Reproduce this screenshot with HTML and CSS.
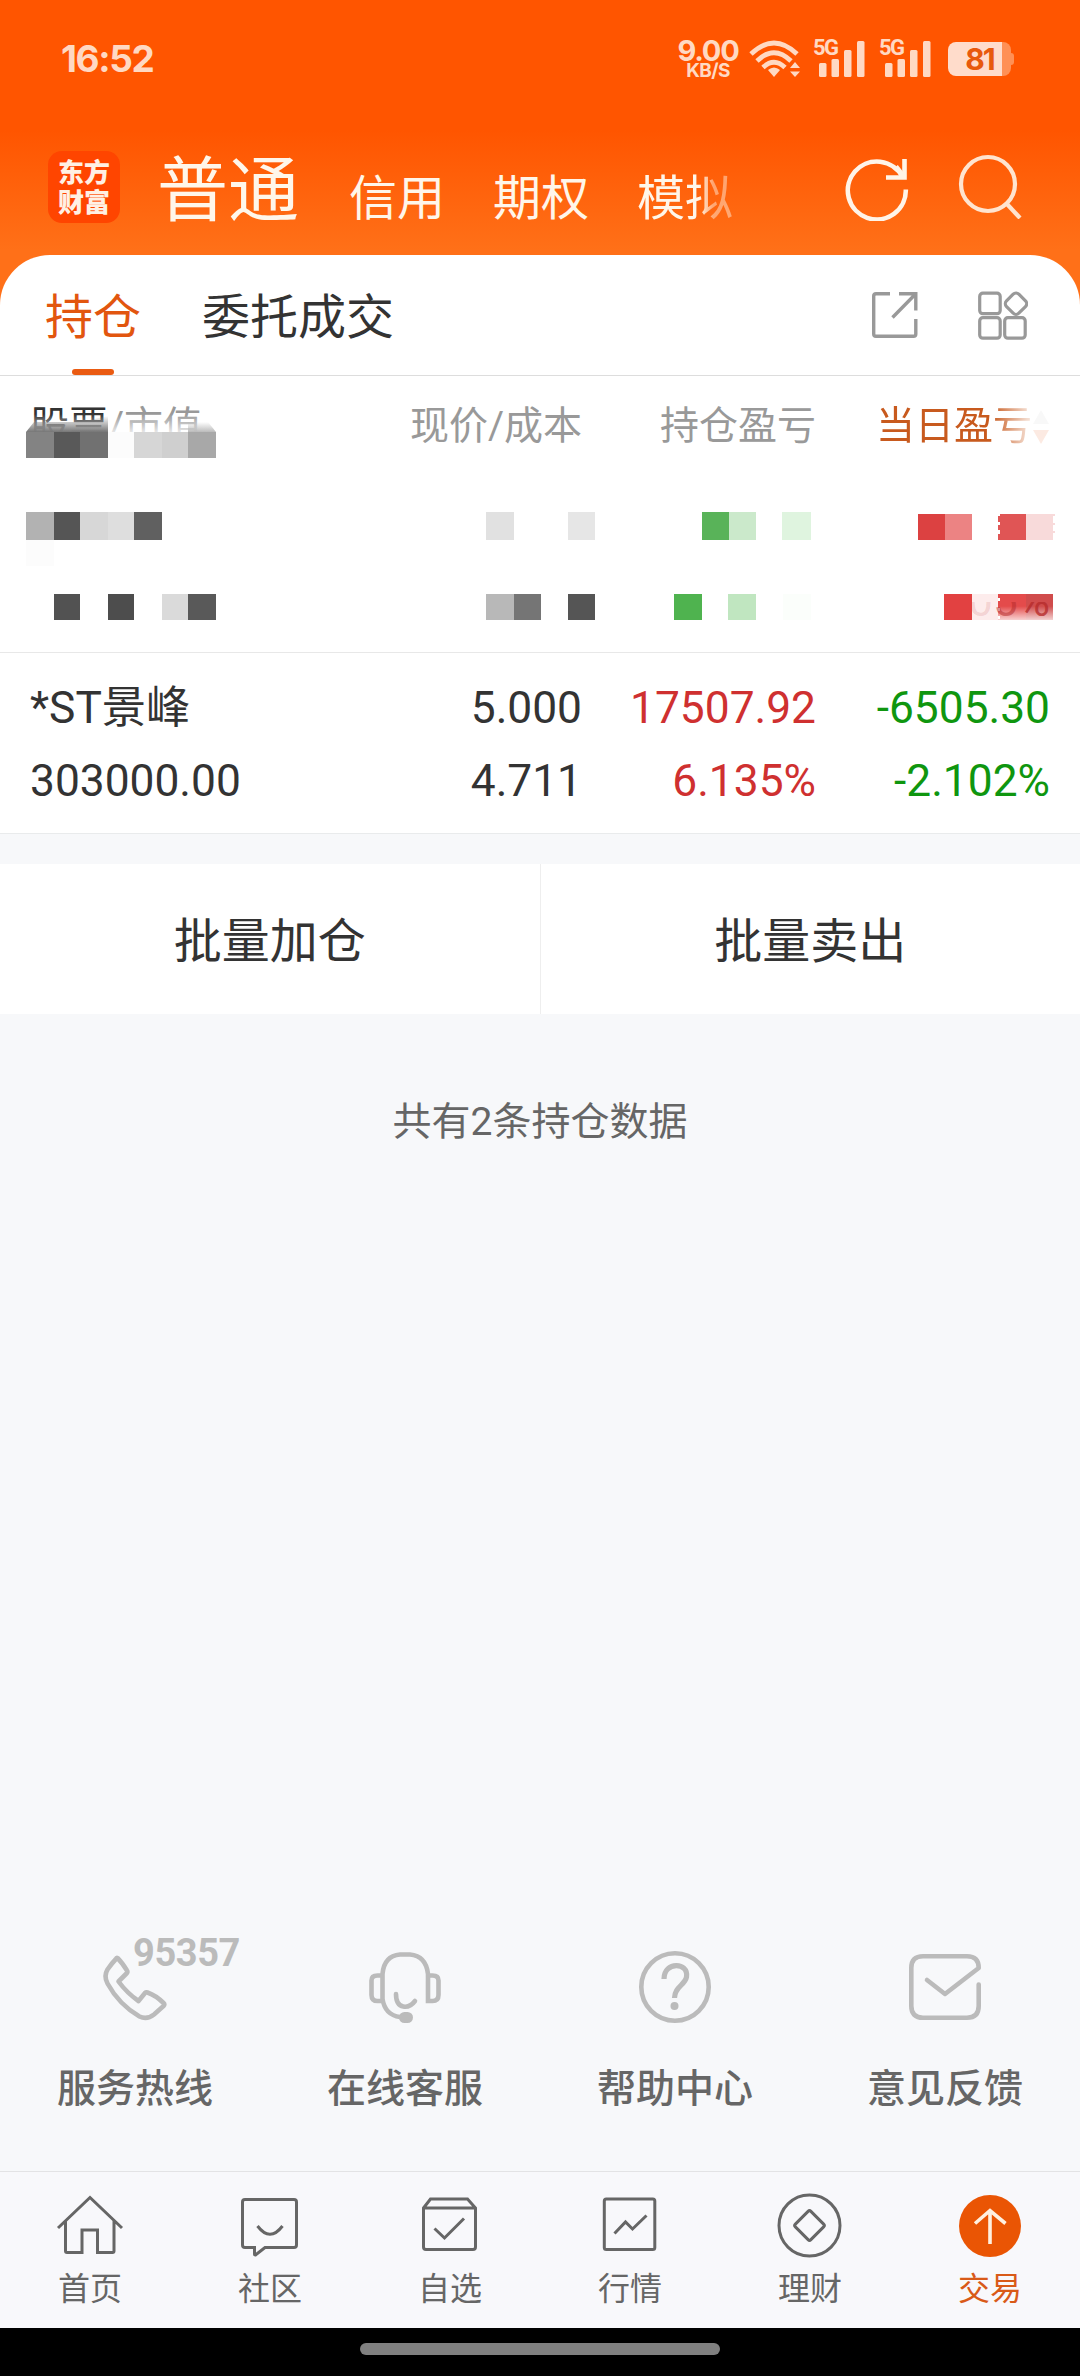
FILE: index.html
```html
<!DOCTYPE html>
<html lang="zh-CN">
<head>
<meta charset="utf-8">
<title>持仓</title>
<link rel="stylesheet" href="styles.css">
</head>
<body>
<div class="app">
  <header class="top">
    <div class="status">
      <span class="clock">16:52</span>
      <div class="status-right">
        <div class="speed"><b>9.00</b><small>KB/S</small></div>
        <svg class="wifi" viewBox="0 0 52 38" width="52" height="38">
          <g fill="none" stroke="#ffd9c3" stroke-width="4.800">
            <path d="M2 14Q25 -8 48 14"/><path d="M8 21Q25 4.500 42 21"/><path d="M14 27.500Q25 17 36 27.500"/>
          </g>
          <path d="M19 30Q25 25 31 30L25 37Z" fill="#ffd9c3"/>
          <path d="M41 28L46 22L51 28ZM41 31.500H51L46 37Z" fill="#ffd9c3"/>
        </svg>
        <div class="signal"><i>5G</i>
          <svg viewBox="0 0 52 38" width="52" height="38" fill="#ffd9c3"><rect x="6" y="23" width="7.500" height="14" rx="1.500"/><rect x="18.500" y="19" width="7.500" height="18" rx="1.500"/><rect x="31" y="10" width="7.500" height="27" rx="1.500"/><rect x="44" y="1" width="7.500" height="36" rx="1.500"/></svg>
        </div>
        <div class="signal"><i>5G</i>
          <svg viewBox="0 0 52 38" width="52" height="38" fill="#ffd9c3"><rect x="6" y="23" width="7.500" height="14" rx="1.500"/><rect x="18.500" y="19" width="7.500" height="18" rx="1.500"/><rect x="31" y="10" width="7.500" height="27" rx="1.500"/><rect x="44" y="1" width="7.500" height="36" rx="1.500"/></svg>
        </div>
        <div class="battery"><span>81</span></div>
      </div>
    </div>
    <div class="nav">
      <div class="logo"><span>东方</span><span>财富</span></div>
      <div class="accounts">
        <span class="current">普通</span><span>信用</span><span>期权</span><span class="fade">模拟</span>
      </div>
      <svg class="refresh" viewBox="0 0 66 66" width="66" height="66" fill="none" stroke="#fff4e8" stroke-width="4.600">
        <path d="M61.800 34.500A29 29 0 1 1 58.500 22"/><path d="M60.500 4V22.500H42"/><path d="M52 11.500L60.500 22.500"/>
      </svg>
      <svg class="search" viewBox="0 0 66 66" width="66" height="66" fill="none" stroke="#ffe4cf" stroke-width="4.200">
        <circle cx="31" cy="31" r="27"/><path d="M49.500 50.500L63 65"/>
      </svg>
    </div>
  </header>

  <main class="panel">
    <div class="tabs">
      <span class="tab on">持仓</span><span class="tab">委托成交</span>
      <svg class="share" viewBox="0 0 48 48" width="48" height="48" fill="none" stroke="#999" stroke-width="3.400">
        <path d="M19 2.700H5Q2.700 2.700 2.700 5V43Q2.700 45.300 5 45.300H42.500Q44.800 45.300 44.800 43V28"/><path d="M28 2.700H44.800V19.500M44.300 3.200L21.500 26.500"/>
      </svg>
      <svg class="modules" viewBox="0 0 50 50" width="50" height="50" fill="none" stroke="#999" stroke-width="3.200">
        <rect x="1.700" y="2.200" width="20.500" height="20.500" rx="3.200"/><rect x="1.700" y="26.700" width="20.500" height="20.500" rx="3.200"/><rect x="26.700" y="26.700" width="20.500" height="20.500" rx="3.200"/>
        <rect x="29.300" y="4" width="17.400" height="17.400" rx="4" transform="rotate(45 38 12.700)"/>
      </svg>
    </div>

    <div class="holdings">
      <div class="row head">
        <span><em>股票</em>/市值</span><span>现价/成本</span><span>持仓盈亏</span>
        <span class="sorted">当日盈亏<svg viewBox="0 0 18 36" width="18" height="36"><path d="M1 15L9 1L17 15Z" fill="#ddd"/><path d="M1 21L9 35L17 21Z" fill="#f0986c"/></svg></span>
      </div>
      <div class="row hidden-row"></div>
      <div class="row stock">
        <span>*ST景峰<br>303000.00</span><span>5.000<br>4.711</span><span class="up">17507.92<br>6.135%</span><span class="down">-6505.30<br>-2.102%</span>
      </div>
      <!-- privacy mosaic over the first holding -->
      <svg class="mosaic" viewBox="0 0 1080 276" width="1080" height="276">
        <defs>
          <linearGradient id="rise" x1="0" y1="0" x2="0" y2="1"><stop offset="0" stop-color="#fff" stop-opacity="0"/><stop offset="1" stop-color="#fff" stop-opacity=".75"/></linearGradient>
          <linearGradient id="dark" x1="0" y1="0" x2="0" y2="1"><stop offset="0" stop-color="#777" stop-opacity="0"/><stop offset="1" stop-color="#777"/></linearGradient>
          <linearGradient id="pale" x1="0" y1="0" x2="0" y2="1"><stop offset="0" stop-color="#bbb" stop-opacity="0"/><stop offset="1" stop-color="#bbb"/></linearGradient>
          <linearGradient id="redfade" x1="0" y1="0" x2="0" y2="1"><stop offset=".45" stop-color="#fff" stop-opacity="0"/><stop offset="1" stop-color="#fff" stop-opacity=".8"/></linearGradient>
          <clipPath id="residue"><rect x="972" y="226" width="82" height="20"/></clipPath>
        </defs>
        <rect x="26" y="38" width="190" height="18" fill="url(#rise)"/>
        <path d="M26 56L34 46H80L108 40V56Z" fill="url(#dark)"/>
        <path d="M188 56V46H208L216 56Z" fill="url(#pale)"/>
        <g shape-rendering="crispEdges">
          <rect x="26" y="56" width="28" height="26" fill="#838383"/><rect x="54" y="56" width="26" height="26" fill="#595959"/><rect x="80" y="56" width="28" height="26" fill="#717171"/><rect x="108" y="56" width="26" height="26" fill="#fcfcfc"/><rect x="134" y="56" width="28" height="26" fill="#d6d6d6"/><rect x="162" y="56" width="26" height="26" fill="#cfcfcf"/><rect x="188" y="56" width="28" height="26" fill="#a8a8a8"/>
          <rect x="26" y="136" width="28" height="28" fill="#b2b2b2"/><rect x="54" y="136" width="26" height="28" fill="#555"/><rect x="80" y="136" width="28" height="28" fill="#d7d7d7"/><rect x="108" y="136" width="26" height="28" fill="#dedede"/><rect x="134" y="136" width="28" height="28" fill="#606060"/><rect x="26" y="164" width="28" height="26" fill="#fcfcfc"/>
          <rect x="486" y="136" width="28" height="28" fill="#e1e1e1"/><rect x="568" y="136" width="27" height="28" fill="#e6e6e6"/>
          <rect x="702" y="136" width="27" height="28" fill="#59b359"/><rect x="729" y="136" width="27" height="28" fill="#cbe9cb"/><rect x="782" y="136" width="29" height="28" fill="#dff4df"/>
          <rect x="918" y="138" width="27" height="26" fill="#dc4141"/><rect x="945" y="138" width="27" height="26" fill="#ec8383"/><rect x="998" y="138" width="28" height="26" fill="#e05555"/><rect x="1026" y="138" width="27" height="26" fill="#f8dada"/>
          <rect x="54" y="218" width="26" height="26" fill="#525252"/><rect x="108" y="218" width="26" height="26" fill="#4d4d4d"/><rect x="162" y="218" width="26" height="26" fill="#dadada"/><rect x="188" y="218" width="28" height="26" fill="#595959"/>
          <rect x="486" y="218" width="28" height="26" fill="#b8b8b8"/><rect x="514" y="218" width="27" height="26" fill="#757575"/><rect x="568" y="218" width="27" height="26" fill="#555"/>
          <rect x="674" y="218" width="28" height="26" fill="#4fb34f"/><rect x="728" y="218" width="28" height="26" fill="#c0e6c0"/><rect x="783" y="218" width="28" height="26" fill="#fbfefb"/>
          <rect x="944" y="218" width="28" height="26" fill="#e24141"/><rect x="972" y="218" width="26" height="26" fill="#fdecec"/><rect x="998" y="218" width="28" height="26" fill="#e44b4b"/><rect x="1026" y="218" width="27" height="26" fill="#d04c4c"/>
        </g>
        <rect x="998" y="218" width="56" height="27" fill="url(#redfade)"/>
        <path d="M998 137h2v3h-2zM998 146h2v3h-2zM998 154h2v4h-2zM998 222h2v3h-2zM998 232h2v3h-2zM998 240h2v3h-2z" fill="#fff"/>
        <path d="M1053 138h2v2h-2zM1053 147h2v2h-2zM1053 155h2v2h-2z" fill="#f8dada"/>
        <g clip-path="url(#residue)"><text class="residue" x="1050" y="240" text-anchor="end"><tspan fill-opacity=".15">0</tspan><tspan fill-opacity=".55">5</tspan>%</text></g>
      </svg>
    </div>

    <div class="batch"><span>批量加仓</span><span>批量卖出</span></div>
    <p class="count">共有2条持仓数据</p>
  </main>

  <section class="services">
    <div class="service">
      <svg viewBox="0 0 76 76" width="76" height="76" fill="none" stroke="#bbb" stroke-width="4.600" stroke-linejoin="round">
        <path d="M18.500 11.500Q15 15 10.500 21.500Q6.500 28 10.500 35.500Q22 56.500 42.500 68.500Q50 72 57 66.500L66.500 58Q68 56.500 66.500 55Q59 47.500 50.500 44.500Q49 44 48 45L41.500 53Q30 45 21.500 33.500L29.500 25.500Q31 24 30 22.500Q25 14.500 20.500 10Q19.500 9.500 18.500 11.500Z"/>
      </svg>
      <b class="hotline">95357</b>
      <span>服务热线</span>
    </div>
    <div class="service">
      <svg viewBox="0 0 76 76" width="76" height="76" fill="none" stroke="#bbb" stroke-width="4.600">
        <path d="M15 53H10.500Q4.500 53 4.500 47V32.500Q4.500 27.500 10.500 27.500H15M61 27.500H65.500Q71.500 27.500 71.500 32.500V47Q71.500 53 65.500 53H61V26Q59 8 43 6.500H33Q17 8 15.500 26V51Q18 67 33 69"/>
        <path d="M29 46C29 62 42 61 48 53" stroke-linecap="round"/><rect x="32" y="64" width="14" height="11" rx="5.500" fill="#bbb" stroke="none"/>
      </svg>
      <span>在线客服</span>
    </div>
    <div class="service">
      <svg viewBox="0 0 76 76" width="76" height="76" fill="none" stroke="#bbb" stroke-width="4.600">
        <circle cx="38" cy="39" r="33.700"/><path d="M27 31C27 13 52 14 49.500 29C48 37 37.500 39 37.500 50" stroke-width="5.200"/><circle cx="37.500" cy="58" r="4" fill="#bbb" stroke="none"/>
      </svg>
      <span>帮助中心</span>
    </div>
    <div class="service">
      <svg viewBox="0 0 76 76" width="76" height="76" fill="none" stroke="#bbb" stroke-width="4.600" stroke-linejoin="round" stroke-linecap="round">
        <path d="M71.700 36.500V58Q71.700 69.700 60 69.700H16Q4.300 69.700 4.300 58V20Q4.300 8.300 16 8.300H60Q71.700 8.300 71.700 20L38 46L20 32"/>
      </svg>
      <span>意见反馈</span>
    </div>
  </section>

  <nav class="tabbar">
    <div class="item"><svg viewBox="0 0 90 72" width="90" height="72"><path d="M13 38L45 7.500L77 38M20.500 31V61Q20.500 62.500 22 62.500H37V40H52.500V62.500H67.500Q69 62.500 69 61V31"/></svg><span>首页</span></div>
    <div class="item"><svg viewBox="0 0 90 72" width="90" height="72"><path d="M20 9.500H69Q71.500 9.500 71.500 12V55Q71.500 57.500 69 57.500H40L30.500 65Q29.500 65 29.500 64V57.500H20Q17.500 57.500 17.500 55V12Q17.500 9.500 20 9.500Z"/><path d="M32.500 36Q45 52.500 57.500 36"/></svg><span>社区</span></div>
    <div class="item"><svg viewBox="0 0 90 72" width="90" height="72"><path d="M18.500 18L25.500 9H62.500L70.500 18V57Q70.500 59.500 68 59.500H21Q18.500 59.500 18.500 57ZM18.500 18H70.500M29.500 38.500L39.500 48L59 28.500"/></svg><span>自选</span></div>
    <div class="item"><svg viewBox="0 0 90 72" width="90" height="72"><rect x="19.300" y="9" width="50.500" height="50.500" rx="2"/><path d="M29.500 43.500L40.500 32L47.500 39L61.500 25.500"/></svg><span>行情</span></div>
    <div class="item"><svg viewBox="0 0 90 72" width="90" height="72"><circle cx="44.500" cy="35.500" r="30.500"/><rect x="33.500" y="24.500" width="22" height="22" rx="2" transform="rotate(45 44.500 35.500)"/></svg><span>理财</span></div>
    <div class="item active"><svg viewBox="0 0 90 72" width="90" height="72"><circle cx="45" cy="36" r="31"/><path d="M45 54V21M30 33.500L45 20.500L60.500 33.500"/></svg><span>交易</span></div>
  </nav>
  <div class="gesture"><i></i></div>
</div>
</body>
</html>
```
FILE: styles.css
```css
* { box-sizing: border-box; }
body {
  margin: 0;
  font-family: Roboto, "Noto Sans CJK SC", sans-serif;
  color: #333;
}
svg { display: block; flex: none; }
.app {
  width: 1080px;
  height: 2376px;
  display: flex;
  flex-direction: column;
  overflow: hidden;
  background: #f7f8fa;
}

/* header */
.top {
  height: 310px;
  flex: none;
  background: linear-gradient(#ff5500 0, #ff5500 130px, #ff7018 250px);
}
.status {
  height: 118px;
  padding: 0 69px 0 61px;
  display: flex;
  justify-content: space-between;
  align-items: center;
  color: #ffd9c3;
  font-family: Inter, sans-serif;
}
.clock { font-size: 37px; line-height: 44px; margin-bottom: 1px; font-weight: 700; letter-spacing: -1.4px; }
.status-right { display: flex; align-items: center; }
.speed {
  width: 60px;
  margin-right: 11px;
  display: flex;
  flex-direction: column;
  align-items: center;
  line-height: 1;
}
.speed b { font-size: 29px; line-height: 22px; font-weight: 700; letter-spacing: -1.2px; }
.speed small { font-size: 19px; line-height: 17px; font-weight: 700; letter-spacing: -.6px; }
.signal { position: relative; margin-left: 14px; }
.wifi + .signal { margin-left: 12px; }
.signal i {
  position: absolute;
  left: 0;
  top: -3px;
  font: 700 22px/22px Roboto, sans-serif;
  letter-spacing: -1.5px;
}
.battery {
  position: relative;
  width: 63px;
  height: 34px;
  margin-left: 17px;
  border-radius: 8px;
  background: linear-gradient(90deg, #ffdccb 54px, #ff9055 54px);
  color: #e8590c;
  text-align: center;
  font-size: 30px;
  line-height: 35px;
  font-weight: 700;
  letter-spacing: -2px;
}
.battery::after {
  content: "";
  position: absolute;
  left: 63px;
  top: 11px;
  width: 3px;
  height: 12px;
  border-radius: 0 3px 3px 0;
  background: #ff9055;
}
.nav {
  height: 137px;
  padding-left: 48px;
  display: flex;
  align-items: flex-start;
}
.logo {
  width: 72px;
  height: 72px;
  margin-top: 33px;
  padding-top: 5px;
  border-radius: 14px;
  background: #ff4500;
  color: #fff0e4;
  display: flex;
  flex-direction: column;
  align-items: center;
  font: 900 26px/30px "Noto Sans CJK SC", sans-serif;
}
.accounts {
  width: 620px;
  margin-left: 37px;
  display: flex;
  align-items: baseline;
  gap: 48px;
  color: #fff6ea;
  font-size: 48px;
  line-height: 146px;
}
.accounts .current { font-size: 71px; margin-right: 2px; }
.fade { -webkit-mask: linear-gradient(90deg, #000 62px, rgba(0,0,0,.45) 76px); mask: linear-gradient(90deg, #000 62px, rgba(0,0,0,.45) 76px); }
.refresh { margin-top: 37px; margin-left: 67px; }
.search { margin-top: 35px; margin-left: 47px; }

/* holdings panel */
.panel {
  flex: 1;
  margin-top: -55px;
  border-radius: 50px 50px 0 0;
  background: linear-gradient(#fff 579px, #f7f8fa 579px);
}
.tabs {
  height: 121px;
  padding-left: 45px;
  display: flex;
  border-bottom: 1px solid #ddd;
  font-size: 48px;
  line-height: 126px;
}
.tab { position: relative; margin-right: 61px; }
.tab.on { color: #e2560f; }
.tab.on::after {
  content: "";
  position: absolute;
  left: 27px;
  top: 114px;
  width: 42px;
  height: 6px;
  border-radius: 3px;
  background: #ea5b12;
}
.share { margin: 36px 0 0 416px; }
.modules { margin: 36px 0 0 59px; }
.holdings { position: relative; }
.row {
  padding: 0 30px;
  display: grid;
  grid-template-columns: 300px 252px 234px 234px;
}
.row > span { text-align: right; }
.row > span:first-child { text-align: left; }
.head {
  height: 100px;
  font-size: 39px;
  line-height: 101px;
  color: #999;
}
.head em { font-style: normal; color: #333; }
.head .sorted {
  display: flex;
  justify-content: flex-end;
  align-items: center;
  color: #c85a1e;
  -webkit-mask: linear-gradient(90deg, #000 175px, rgba(0,0,0,.2) 212px);
  mask: linear-gradient(90deg, #000 175px, rgba(0,0,0,.2) 212px);
}
.hidden-row { height: 177px; border-bottom: 1px solid #e8e8e8; }
.stock {
  height: 181px;
  padding-top: 19px;
  font-size: 44.3px;
  line-height: 73px;
  border-bottom: 1px solid #e9ebec;
}
.up { color: #cf3030; }
.down { color: #0f960f; }
.mosaic { position: absolute; left: 0; top: 0; }
.residue { font-size: 44px; fill: #b62c2c; fill-opacity: .8; }
.batch {
  height: 150px;
  margin-top: 30px;
  display: flex;
  background: #fff;
  font-size: 48px;
  line-height: 156px;
}
.batch span { flex: 1; text-align: center; }
.batch span:first-child { border-right: 1px solid #eee; }
.count {
  margin: 78px 0 0;
  text-align: center;
  font-size: 39px;
  line-height: 60px;
  color: #666;
}

/* service links */
.services { height: 236px; flex: none; display: flex; }
.service {
  position: relative;
  width: 270px;
  padding-top: 13px;
  display: flex;
  flex-direction: column;
  align-items: center;
  color: #666;
  font-size: 39px;
  font-weight: 500;
}
.service span { margin-top: 35px; line-height: 60px; }
.hotline {
  position: absolute;
  left: 133px;
  top: 1px;
  color: #bbb;
  font: 700 38px/34px Roboto, sans-serif;
  letter-spacing: -.4px;
}

/* bottom bar */
.tabbar {
  height: 157px;
  flex: none;
  display: flex;
  border-top: 1px solid #e3e3e5;
  background: #f8f8fb;
}
.item {
  width: 180px;
  padding-top: 18px;
  display: flex;
  flex-direction: column;
  align-items: center;
  color: #666;
  font-size: 32px;
  line-height: 54px;
}
.item svg { fill: none; stroke: #666; stroke-width: 3; }
.active { color: #d95a18; }
.active svg { stroke: #fff0e0; stroke-width: 3.6; }
.active circle { fill: #ea5504; stroke: none; }
.gesture {
  height: 48px;
  flex: none;
  padding-top: 15px;
  background: #000;
}
.gesture i {
  display: block;
  width: 360px;
  height: 12px;
  margin: 0 auto;
  border-radius: 6px;
  background: #808080;
}
```
